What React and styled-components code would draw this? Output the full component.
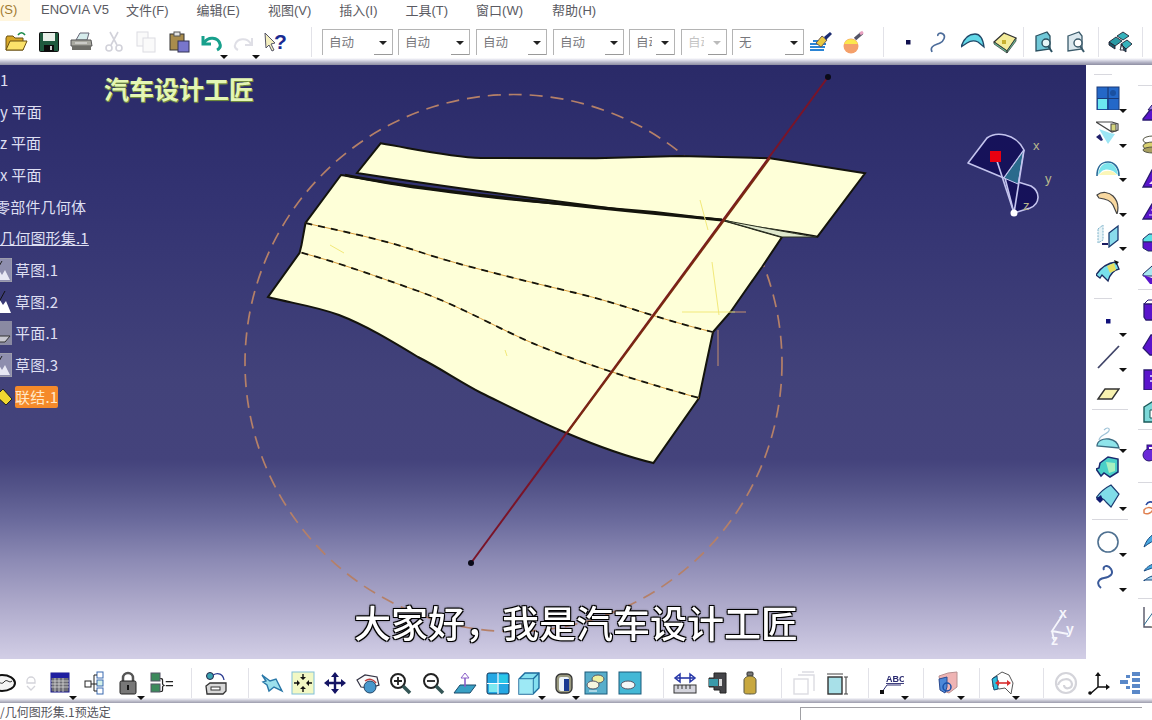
import React from 'react';
import styled, { createGlobalStyle } from 'styled-components';

const GlobalStyle = createGlobalStyle`
  html, body { margin: 0; padding: 0; background: #fff; overflow: hidden; }
  body { font-family: "Liberation Sans", "Noto Sans CJK SC", sans-serif; }
`;

const Frame = styled.div`
  position: relative;
  width: 1152px;
  height: 720px;
  overflow: hidden;
  background: #fff;
`;
const Screen = styled.div`
  display: flex;
  flex-direction: column;
  width: 1152px;
  height: 720px;
  filter: blur(0.65px);
`;
const MenuBar = styled.div`
  display: flex;
  align-items: center;
  height: 18px;
  padding-bottom: 3px;
  background: #fff;
  color: #5a5a62;
  font: 13px "Liberation Sans", "Noto Sans CJK SC", sans-serif;
`;
const SystemTab = styled.div`
  width: 30px;
  height: 100%;
  margin-bottom: -3px;
  padding-bottom: 3px;
  display: flex;
  align-items: center;
  background: #fff6de;
  color: #a07a30;
`;
const MenuItem = styled.span`
  margin-left: ${p => p.$before}px;
  white-space: nowrap;
`;
const Toolbar = styled.div`
  flex: none;
  display: flex;
  align-items: center;
  height: 38px;
  padding: 2px 0 4px;
  background: linear-gradient(#fff 0, #fff 84%, #e4e4ee 88%, #b4b4c6 94%, #8e8ea2 100%);
`;
const BottomBar = styled(Toolbar)`
  background: linear-gradient(#fff 0, #fff 88%, #dcdce6 92%, #9c9cac 100%);
  padding: 9px 0 5px;
  height: 30px;
`;
const Slot = styled.div`
  position: relative;
  flex: none;
  width: 32.5px;
  height: 24px;
  margin-left: ${p => p.$before || 0}px;
  display: flex;
  justify-content: center;
  ${p => p.$arrow && `
    &::after {
      content: "";
      position: absolute;
      right: 0;
      top: 25px;
      border: 4px solid transparent;
      border-top: 4px solid #111;
      border-bottom: 0;
    }
  `}
`;
const ToolSep = styled.div`
  flex: none;
  width: 1px;
  height: 30px;
  margin-left: ${p => p.$before || 0}px;
  background: #e2e2e8;
`;
const Drop = styled.div`
  position: relative;
  flex: none;
  box-sizing: border-box;
  width: ${p => p.$w}px;
  height: 26px;
  margin-left: ${p => p.$before}px;
  padding: 2px 0 0 6px;
  border: 1px solid #b4b4b4;
  border-bottom: 0;
  color: ${p => (p.$faded ? '#c4c4c4' : '#77777c')};
  font: 12.5px "Noto Sans CJK SC", sans-serif;
  &::before {
    content: "";
    position: absolute;
    right: 5px;
    top: 11px;
    border: 4px solid transparent;
    border-top: 4px solid ${p => (p.$faded ? '#bbb' : '#222')};
    border-bottom: 0;
  }
  &::after {
    content: "";
    position: absolute;
    right: 0;
    bottom: 0;
    width: 18px;
    height: 1px;
    background: #999;
  }
`;
const DropLabel = styled.div`
  width: ${p => p.$w - 30}px;
  overflow: hidden;
  white-space: nowrap;
`;
const Main = styled.div`
  flex: 1;
  min-height: 0;
  display: flex;
`;
const Viewport = styled.div`
  position: relative;
  flex: 1;
  overflow: hidden;
  background: linear-gradient(#2a2a68 0%, #333372 22.7%, #42427a 53%, #44437c 66.5%, #55558a 71.5%, #6a6a9c 76.6%, #8c8ab4 83.3%, #aaa6c8 90%, #d2cee6 100%);
`;
const Scene = styled.svg`
  position: absolute;
  inset: 0;
  display: block;
`;
const Tree = styled.div`
  position: absolute;
  left: 0;
  top: -1px;
  color: #dedff2;
  font: 15px "Noto Sans CJK SC", sans-serif;
`;
const TreeRow = styled.div`
  display: flex;
  align-items: center;
  height: 31.7px;
  white-space: nowrap;
  margin-left: ${p => p.$shift || 0}px;
`;
const TreeIcon = styled.div`
  width: 12px;
  height: 24px;
  flex: none;
  overflow: hidden;
  display: flex;
  justify-content: flex-end;
  margin-right: 3px;
`;
const TreeText = styled.span`
  line-height: 22px;
  letter-spacing: 0.2px;
  background: ${p => (p.$active ? '#f58a2a' : 'transparent')};
  color: ${p => (p.$active ? '#ffe8c8' : 'inherit')};
  text-decoration: ${p => (p.$line ? 'underline' : 'none')};
  border-radius: 2px;
`;
const Watermark = styled.div`
  position: absolute;
  left: 104px;
  top: 8px;
  color: #e4f6b4;
  font: 700 25px/30px "Noto Sans CJK SC", sans-serif;
  text-shadow: 1px 1px 0 #6f8a3c, 0 1px 1px #8aa850;
`;
const RightPanel = styled.div`
  flex: none;
  width: 66px;
  display: flex;
  background: #fff;
  overflow: hidden;
`;
const ColOne = styled.div`
  flex: none;
  width: 44px;
  padding-top: 9px;
  display: flex;
  flex-direction: column;
`;
const ColTwo = styled.div`
  flex: none;
  width: 22px;
  padding-top: 20px;
  display: flex;
  flex-direction: column;
`;
const PanelSep = styled.div`
  flex: none;
  height: 1px;
  margin: ${p => p.$top}px 0 ${p => p.$bottom || 0}px ${p => p.$left}px;
  width: ${p => p.$w}px;
  background: #d8d8de;
`;
const PanelIcon = styled.div`
  position: relative;
  flex: none;
  height: ${p => p.$h}px;
  margin-top: ${p => p.$top || 0}px;
  padding-left: ${p => p.$left}px;
  display: flex;
  align-items: center;
  ${p => p.$arrow && `
    &::after {
      content: "";
      position: absolute;
      left: 33px;
      top: ${p.$h / 2 + 11}px;
      border: 4px solid transparent;
      border-top: 4px solid #111;
      border-bottom: 0;
    }
  `}
`;
const StatusBar = styled.div`
  flex: none;
  display: flex;
  justify-content: space-between;
  height: 17px;
  background: #fff;
  color: #55555c;
  font: 12px/17px "Noto Sans CJK SC", sans-serif;
`;
const StatusBox = styled.div`
  width: 341px;
  margin: 4px 10px 0 0;
  border-top: 1px solid #a0a0a4;
  border-left: 1px solid #a0a0a4;
`;
const Subtitle = styled.div`
  position: absolute;
  left: 0;
  right: 0;
  top: 597px;
  text-align: center;
  color: #fff;
  font: 500 37px/50px "Noto Sans CJK SC", sans-serif;
  text-shadow: -1px -1px 0 #000, 1px -1px 0 #000, -1px 1px 0 #000, 1px 1px 0 #000, 0 0 3px #000;
`;
const IconSvg = styled.svg`
  display: block;
  flex: none;
  width: 24px;
  height: 24px;
`;
const Small = styled.text`
  font-family: "Liberation Sans", sans-serif;
`;

const Mag = ({ c = '#222' }) => (
  <>
    <circle cx="10" cy="10" r="7" fill="#fff" stroke={c} strokeWidth="2" />
    <path d="M15 15l7 7" stroke="#355" strokeWidth="3.5" />
  </>
);
const purple = (d, extra) => (
  <>
    <path d={d} fill="#5a14cc" stroke="#2a1a70" strokeWidth="1.3" />
    {extra}
  </>
);

const icons = {
  folder: <><path d="M2 8l1-2h6l2 2h8v12H2z" fill="#d8a828" stroke="#6a5010" /><path d="M6 11h17l-4 9H2z" fill="#fbe26a" stroke="#6a5010" /><path d="M14 5c2-3 5-3 7 0" stroke="#1a8a4a" strokeWidth="1.6" fill="none" /></>,
  save: <><rect x="2.5" y="2.5" width="19" height="19" rx="1" fill="#1f5a3e" stroke="#111" /><rect x="6" y="3" width="12" height="8" fill="#e8efe8" /><rect x="7" y="15" width="10" height="6.5" fill="#0c0c0c" /><rect x="13" y="16" width="2" height="4" fill="#ccc" /></>,
  print: <><path d="M7 10l4-7h9l-2 7z" fill="#d6ecec" stroke="#667" /><path d="M2 10h20l1 6H2z" fill="#a9a9a0" stroke="#555" /><path d="M3 16h19v4H3z" fill="#6e6e68" /><path d="M6 13h12" stroke="#eee" /></>,
  cut: <g stroke="#d2d2da" strokeWidth="1.6" fill="none"><path d="M8 2l7 13M16 2L9 15" /><circle cx="7" cy="18" r="3" /><circle cx="17" cy="18" r="3" /></g>,
  copy: <g stroke="#dcdce2" fill="#fafafa"><rect x="3" y="2" width="11" height="14" /><rect x="9" y="8" width="12" height="14" /></g>,
  paste: <><rect x="3" y="4" width="14" height="16" fill="#a98c4c" stroke="#333" /><rect x="7" y="2" width="6" height="4" fill="#e4e4e4" stroke="#555" /><rect x="11" y="11" width="11" height="11" fill="#7876cc" stroke="#335" /></>,
  undo: <g fill="none" stroke="#17a08c" strokeWidth="3"><path d="M4 6v8h8" /><path d="M5 13c4-7 14-6 16 1c1 3-1 5-3 6" /></g>,
  redo: <g fill="none" stroke="#dfdfe6" strokeWidth="2"><path d="M20 8v7h-7" /><path d="M19 14c-4-7-14-6-16 1c-1 3 1 4 3 5" /></g>,
  help: <><path d="M1 3l10 10l-4 1l3 6l-2 1l-3-6l-3 3z" fill="#f4efc0" stroke="#556" /><Small x="10" y="19" fontSize="21" fontWeight="700" fill="#1a2a92">?</Small></>,
  brush: <><path d="M1 14h16M1 17h15M1 20h14M4 11h11" stroke="#2a84d4" strokeWidth="2" /><path d="M7 13l6-7 5 4-6 7z" fill="#e8c840" stroke="#655" /><path d="M15 7l6-5 2 2-6 6z" fill="#1c2c70" /></>,
  ball: <><circle cx="9" cy="16" r="7.5" fill="#f4a06a" /><path d="M2 14a7.5 7.5 0 0 1 14 0z" fill="#fbe84c" /><path d="M13 9l7-6" stroke="#556" strokeWidth="3.5" /><path d="M18 4l3-2" stroke="#e8a0c0" strokeWidth="3" /></>,
  dot: <rect x="10" y="10" width="4.5" height="4.5" fill="#10104e" />,
  curve: <path d="M4 22c-3-6 4-7 8-9s6-7 3-9s-6 0-5 2" stroke="#4c6c9a" strokeWidth="1.6" fill="none" />,
  surf: <path d="M0 17C3 8 8 4 14 4c5 0 8 5 9 13l-6-5c-4-2-8-1-11 1z" fill="#62d8e8" stroke="#204868" strokeWidth="1.3" />,
  solid: <><path d="M1 12L11 3l12 5-9 13z" fill="#f4ec9a" stroke="#303030" strokeWidth="1.2" /><path d="M14 21l9-13v3l-9 12zM1 12l13 9v2L1 14z" fill="#6dc49c" stroke="#303030" strokeWidth=".7" /><rect x="9" y="10" width="4" height="4" fill="#c8b030" /></>,
  bin: <><path d="M3 6l11-4 3 4v13l-14 2z" fill="#70c8d8" stroke="#2a5060" strokeWidth="1.3" /><circle cx="13" cy="13" r="4" fill="#e6f6f8" stroke="#2a5060" strokeWidth="1.4" /><path d="M15 16l4 6" stroke="#2a5060" strokeWidth="2" /></>,
  bin2: <><path d="M3 6l11-4 3 4v13l-14 2z" fill="#dbe8ee" stroke="#3a5a6a" strokeWidth="1.3" /><circle cx="13" cy="13" r="4" fill="#fff" stroke="#3a5a6a" strokeWidth="1.4" /><path d="M15 16l4 6" stroke="#3a5a6a" strokeWidth="2" /></>,
  assembly: <g stroke="#223" strokeWidth=".9"><path d="M1 12l7-5 6 4-7 5z" fill="#2a9aa4" /><path d="M9 6l6-4 6 4-6 4z" fill="#35b2bc" /><path d="M13 14l6-4 5 4-6 5z" fill="#35b2bc" /><path d="M1 12v3l6 4v-3zM13 14v4l5 4v-3z" fill="#1a5a6a" /><path d="M12 20l2-6 2 6z" fill="#e8f4f4" /></g>,
  topo: <><ellipse cx="9" cy="12" rx="13" ry="8" fill="#f4f4f4" stroke="#111" strokeWidth="2" /><path d="M2 12c3-4 6 3 9-1s5 2 8-1" stroke="#333" fill="none" /></>,
  aFade: <g fill="none" stroke="#d4d4da" strokeWidth="1.3"><path d="M8 10a4 4 0 0 1 8 0v2H8z" /><path d="M8 15l4 4 4-4" /></g>,
  table: <><rect x="3" y="2" width="18" height="19" fill="#6e6e74" stroke="#14148c" /><rect x="3" y="2" width="18" height="5" fill="#1e1ea0" /><path d="M3 10h18M3 13h18M3 16h18M7 7v14M11 7v14M15 7v14" stroke="#d8d8d8" strokeWidth=".8" /></>,
  flow: <g stroke="#3a6ab0" fill="#fff"><rect x="14" y="1" width="6" height="6" /><rect x="14" y="9" width="6" height="6" fill="#d4f0e8" /><rect x="14" y="17" width="6" height="6" /><rect x="2" y="10" width="6" height="6" stroke="#222" /><path d="M8 13h6M11 13V4h3M11 13v7h3" stroke="#222" fill="none" /></g>,
  lock: <><path d="M7 11V7a5 5 0 0 1 10 0v4" fill="none" stroke="#555" strokeWidth="2.5" /><rect x="4" y="10" width="16" height="13" rx="1.5" fill="#777" stroke="#222" /><rect x="11" y="14" width="2" height="5" fill="#111" /></>,
  bracket: <><rect x="1" y="2" width="9" height="8" fill="#3c8a5c" stroke="#556" /><rect x="1" y="13" width="9" height="8" fill="#3c8a5c" stroke="#556" /><Small x="10" y="18" fontSize="15" fill="#222">{'}='}</Small></>,
  transfer: <><circle cx="6" cy="5" r="3.5" fill="#3aa0b0" stroke="#224" /><path d="M9 4c5-3 10-1 11 5" fill="none" stroke="#2a3a90" strokeWidth="1.3" /><path d="M2 15l4-3h16v8l-3 3H3z" fill="#d8d8d8" stroke="#333" strokeWidth="1.3" /><rect x="7" y="16" width="9" height="3" fill="#fff" stroke="#333" /></>,
  plane: <path d="M2 4l8 6 6-2 6 12-8-4-5 4-2-6-4-3 3-1z" fill="#9ce0ec" stroke="#2a78a8" strokeWidth="1.4" />,
  fit: <><rect x="1" y="1" width="22" height="22" fill="#f2f8c4" stroke="#80c0d8" /><path d="M12 3v5M12 16v5M3 12h5M16 12h5" stroke="#111" strokeWidth="1.4" /><path d="M9 6l3 3 3-3zM9 18l3-3 3 3zM6 9l3 3-3 3zM18 9l-3 3 3 3z" fill="#111" /></>,
  pan: <><path d="M12 4v16M4 12h16" stroke="#141464" strokeWidth="2.4" /><path d="M8 6l4-5 4 5zM8 18l4 5 4-5zM6 8l-5 4 5 4zM18 8l5 4-5 4z" fill="#141464" /></>,
  rot: <><path d="M1 9l8-5 12 2 2 8-9 3-9-1z" fill="#fafafa" stroke="#334" strokeWidth="1.2" /><path d="M9 10c4-3 8-2 11 2" fill="none" stroke="#c04040" strokeWidth="1.5" /><circle cx="14" cy="16" r="6" fill="#4898cc" stroke="#246" /></>,
  zoomIn: <><Mag /><path d="M6 10h8M10 6v8" stroke="#222" strokeWidth="1.8" /></>,
  zoomOut: <><Mag /><path d="M6 10h8" stroke="#222" strokeWidth="1.8" /></>,
  normal: <><path d="M1 22l6-8h16l-6 8z" fill="#38a0c4" stroke="#1a4a6a" /><path d="M12 16V4" stroke="#8a60c8" strokeWidth="1.6" /><path d="M8 7l4-5 4 5z" fill="#fff" stroke="#8a60c8" /></>,
  quad: <><rect x="1" y="2" width="22" height="21" rx="2" fill="#26a8e4" stroke="#135" /><rect x="3" y="13" width="8.5" height="8" fill="#7ce8f0" /><rect x="13" y="4" width="8.5" height="8" fill="#2ac8e8" /><path d="M12 2v21M1 12.5h22" stroke="#fff" strokeWidth="1.2" /></>,
  cube: <><path d="M2 8l6-6h14v15l-6 6H2z" fill="#84e0f0" stroke="#1a6a9c" strokeWidth="1.4" /><path d="M2 8h14v15M16 8l6-6" fill="none" stroke="#1a6a9c" strokeWidth="1.4" /><path d="M2 8h14v15H2z" fill="#a8ecf6" fillOpacity=".7" /></>,
  cyl: <><rect x="4" y="3" width="16" height="19" rx="5" fill="#9a9a80" stroke="#333" strokeWidth="1.3" /><rect x="7" y="6" width="10" height="14" rx="2" fill="#eef4f8" /><rect x="12" y="8" width="5" height="12" fill="#1a3a90" /></>,
  view1: <><rect x="1" y="1" width="22" height="22" fill="#58aecb" stroke="#1a5a7a" /><ellipse cx="14" cy="8" rx="6" ry="4" fill="#f0f0a0" stroke="#556" /><ellipse cx="9" cy="14" rx="6" ry="4" fill="#f6f6e0" stroke="#556" /><path d="M5 20h8" stroke="#fff" /></>,
  view2: <><rect x="1" y="1" width="22" height="22" fill="#44b8d6" stroke="#1a5a7a" /><ellipse cx="10" cy="14" rx="7" ry="4" fill="#f4f8f8" stroke="#556" /></>,
  measure: <><path d="M3 7h18" stroke="#2838a8" strokeWidth="1.6" /><path d="M7 3L2 7l5 4zM17 3l5 4-5 4z" fill="none" stroke="#2838a8" strokeWidth="1.5" /><rect x="1" y="14" width="22" height="8" fill="#d4d4dc" stroke="#333" /><path d="M5 14v4M9 14v4M13 14v4M17 14v4" stroke="#333" /></>,
  camera: <><path d="M8 2h12v20h-6v-3H8v-3H3V7h5z" fill="#444448" stroke="#222" /><path d="M3 8h9v7H3z" fill="#3a9aaa" /><rect x="13" y="8" width="3" height="7" fill="#ddd" /></>,
  bottle: <><rect x="9" y="1" width="6" height="4" rx="1" fill="#777" stroke="#333" /><path d="M6 9c0-2 3-4 6-4s6 2 6 4v12c0 2-2 2-6 2s-6 0-6-2z" fill="#c8a840" stroke="#554" /></>,
  fadeBox: <g fill="none" stroke="#dcdce2" strokeWidth="1.4"><rect x="2" y="8" width="14" height="15" /><path d="M6 4h16v16M10 1h12" /></g>,
  dimBox: <><rect x="3" y="6" width="14" height="17" fill="#a8e0e8" stroke="#333" strokeWidth="1.4" /><path d="M2 3h16M21 6v17M19 6h4M19 23h4" stroke="#444" strokeWidth="1.1" /></>,
  abc: <><Small x="6" y="11" fontSize="9" fontWeight="700" fill="#2a2a70" textDecoration="underline">ABC</Small><path d="M2 21l5-7h14" stroke="#2a2a70" fill="none" /><rect x="0" y="19" width="4" height="4" fill="#111" /></>,
  part: <><path d="M3 5l9-3 9-1v15l-8 6-8-3z" fill="#efb4b4" stroke="#b89090" /><path d="M3 8l8-2v10l-2 6-5-3z" fill="#4c88d8" stroke="#2a4a90" /><circle cx="11" cy="16" r="4" fill="none" stroke="#1a50a8" strokeWidth="1.5" /></>,
  compare: <><path d="M2 7l9-6 7 3 4 8-2 11-6-6-6 1-6-2z" fill="#fff" stroke="#555" /><path d="M1 8l5-3 1 13-4 1z" fill="#30c0e0" stroke="#1a4a70" /><path d="M5 12h14" stroke="#d83030" strokeWidth="1.6" /><path d="M8 9l-4 3 4 3zM16 9l4 3-4 3z" fill="#d83030" /></>,
  spiral: <g fill="none" stroke="#d4d4da" strokeWidth="2.2"><circle cx="12" cy="12" r="10" /><path d="M4 14c2-7 13-8 14-1c0 5-8 6-8 1" /></g>,
  axes: <><path d="M11 3v13l-8 7M11 16h10" stroke="#111" strokeWidth="1.5" fill="none" /><path d="M8 5l3-4 3 4zM19 13l4 3-4 3z" fill="#111" /><circle cx="3" cy="22" r="1.8" fill="#111" /></>,
  specTree: <g fill="#5a88c8"><rect x="13" y="1" width="8" height="4" /><rect x="13" y="7" width="8" height="4" /><rect x="13" y="13" width="8" height="4" /><rect x="13" y="19" width="8" height="4" /><rect x="1" y="9" width="8" height="4" /><rect x="7" y="4" width="4" height="3" /><rect x="7" y="15" width="4" height="3" /></g>,
  grid4: <><rect x="1" y="1" width="22" height="23" fill="#2468c8" stroke="#1a3a78" /><rect x="2" y="13" width="9" height="10" fill="#6ce8f0" /><path d="M12 1v23M1 12.5h22" stroke="#1a3a78" strokeWidth="1.2" /><circle cx="17" cy="7" r="3" fill="#1a50a0" /></>,
  saw: <><path d="M0 1h16l6 2v6l-6 2z" fill="#fff" stroke="#444" strokeWidth="1.2" /><rect x="15" y="3" width="5" height="7" fill="#d4d47c" stroke="#444" /><path d="M3 8l11 4 5 1-7 10z" fill="#9ce6f4" /><path d="M0 16l4-3 3 6-2 1z" fill="#20206a" /></>,
  arch: <><path d="M1 21c0-10 5-14 11-14s11 5 11 14" fill="none" stroke="#2a6a98" strokeWidth="1.6" /><path d="M2 20c1-8 5-12 10-12s9 4 10 12l-5-4c-4-2-8-2-11 0z" fill="#7ce4ec" /><path d="M5 18c4-3 10-3 14 0l2 2H3z" fill="#fbf6b8" /></>,
  horn: <><path d="M1 5c5-4 12-3 16 1c5 5 6 11 4 18l-4-9c-2-4-6-6-14-7z" fill="#f8d8a0" stroke="#444" strokeWidth="1.2" /></>,
  mirror: <><path d="M2 5l5-4v15l-5 3z" fill="#e8f4f8" stroke="#7ab0c8" strokeDasharray="2 1" /><path d="M13 9l9-7v14l-9 7z" fill="#8adcec" stroke="#1a3a70" strokeWidth="1.3" /><path d="M6 20h6" stroke="#1a1a60" strokeWidth="2" /></>,
  surfArrow: <><path d="M0 16C5 8 12 4 20 3l3 7c-5 1-9 5-11 12l-6-6-2 3z" fill="#78e0ec" stroke="#1a2a60" strokeWidth="1.3" /><path d="M11 7l7-3 2 7-6 3z" fill="#e8e060" /><path d="M18 1l5 2-3 3z" fill="#111" /></>,
  pointIc: <rect x="10" y="9" width="4.5" height="4.5" fill="#10107a" />,
  lineIc: <path d="M2 23L23 1" stroke="#404468" strokeWidth="1.8" />,
  para: <path d="M2 20l7-10h14l-7 10z" fill="#f8f2b0" stroke="#333" strokeWidth="1.4" />,
  wave: <><path d="M8 4c4-4 7-1 4 2s-8 3-9 8" fill="none" stroke="#a0c4d8" strokeWidth="1.2" /><path d="M1 20c0-5 6-8 12-7s9 4 10 9z" fill="#8ee4ea" stroke="#3a6a80" strokeWidth="1.3" /></>,
  patch: <><path d="M4 8l8-6 10 2v13l-8 5-6-4-3 3-5-7 3-1z" fill="#4ad0c8" stroke="#1a2a70" strokeWidth="1.5" /><path d="M10 7l9 1v8l-6 2z" fill="#a8f0c0" /></>,
  extrude: <><path d="M0 14c4-6 9-10 15-13l8 9-8 13-5-5c-3-4-6-5-10-4z" fill="#80dce8" stroke="#1a3a70" strokeWidth="1.2" /><path d="M0 15l5-4 2 5-3 3z" fill="#111a70" /></>,
  circleIc: <circle cx="12" cy="12" r="10" fill="none" stroke="#4e7090" strokeWidth="1.6" />,
  swirl: <path d="M5 23c-5-4-3-9 3-10s10-4 7-9s-9-3-7 1" fill="none" stroke="#3a5a9a" strokeWidth="2" />,
  p1: purple('M7 18l7-9 10-2v12H7z', <path d="M12 9l4-5h8v4z" fill="#9a80e0" stroke="#2a1a70" />),
  p2: <g stroke="#554" strokeWidth="1"><ellipse cx="17" cy="7" rx="10" ry="4" fill="#fff" /><ellipse cx="17" cy="13" rx="10" ry="4" fill="#d8d070" /><ellipse cx="17" cy="17" rx="10" ry="3" fill="#a8a060" /></g>,
  p3: purple('M7 22l9-17h8v17z', <path d="M13 19l9-9v9z" fill="#f4e8ff" />),
  p4: purple('M7 22l9-15h8v15z', <path d="M13 18h11M15 13h9" stroke="#e8e0ff" />),
  p5: <><path d="M7 10l6-5h11v8H7z" fill="#5ce0e4" stroke="#1a2a60" /><path d="M7 13h17v9H12l-5-3z" fill="#5a14cc" stroke="#1a2a60" /></>,
  p6: <><path d="M7 13l9-8h8v10H7z" fill="#a8e8f0" stroke="#1a2a60" /><path d="M7 14l9 3h8v6H14z" fill="#5a14cc" /></>,
  p7: purple('M8 6h16v16H10l-2-3z', <path d="M8 6l4-4h12" stroke="#2a1a70" fill="none" />),
  p8: purple('M7 16l8-13h9v20H14z'),
  p9: purple('M8 4h16v20H8z', <path d="M14 10h10M14 15h10" stroke="#c8b8ff" strokeWidth="2" />),
  p10: <><path d="M8 8l8-5h8v20H8z" fill="#7cd8d8" stroke="#1a5a5a" strokeWidth="1.4" /><path d="M14 11h10v8H14z" fill="#fff" stroke="#1a5a5a" /></>,
  p11: <><rect x="11" y="5" width="13" height="15" fill="#5a14cc" stroke="#2a1a70" /><circle cx="13" cy="15" r="6" fill="#6a28d8" stroke="#2a1a70" /><path d="M13 8h11" stroke="#fff" strokeWidth="2" /></>,
  p12: <><path d="M10 11c2-4 6-4 8-1" stroke="#2a4aa0" strokeWidth="1.6" fill="none" /><path d="M8 16c2-3 6-3 9-1c-1 4-6 6-9 4z" fill="none" stroke="#e08050" strokeWidth="1.5" /></>,
  p13: <path d="M8 20c3-9 9-14 16-15v7c-6 1-11 4-16 8z" fill="#48a8e0" stroke="#1a4a80" />,
  p14: <><path d="M8 11c3-5 9-8 16-8v4c-6 0-11 2-16 4z" fill="#48a8e0" stroke="#1a4a80" /><path d="M8 21c4-4 9-6 16-6v5H8z" fill="#a8d8f0" stroke="#1a4a80" /></>,
  p15: <><path d="M8 18c3-9 8-13 16-14v7c-6 1-11 3-16 7z" fill="#48a8e0" stroke="#1a4a80" /><path d="M8 18v4h16" fill="none" stroke="#555" /></>,
  p16: <><path d="M8 2v20h16" fill="#fff" stroke="#556" strokeWidth="1.4" /><path d="M8 20L20 3" stroke="#2a6a90" /><path d="M15 22l9-7v7z" fill="#e8d860" /></>,
  sketch: <><rect width="24" height="24" fill="#8e8eae" stroke="#aaa" /><path d="M2 22l7-13 5 8 3-5 5 10z" fill="#e8e8f4" /><path d="M8 3l2 7 4-7" stroke="#222" fill="none" /></>,
  sketch2: <><path d="M2 23l8-16 5 8 3-4 5 12z" fill="#fff" /><path d="M8 3l3 9 6-11" stroke="#111" fill="none" /></>,
  planeNode: <><rect width="24" height="24" fill="#8a8aa2" /><path d="M2 15h20l-5 6H2z" fill="#c8c8d0" stroke="#333" /></>,
  joinNode: <><path d="M15 4l9 10-6 6-10-9z" fill="#f0d830" stroke="#222" /><path d="M6 14l6 7-6 3-6-5z" fill="#30b8e0" stroke="#222" /></>,
};

const Icon = ({ name }) => <IconSvg viewBox="0 0 24 24">{icons[name]}</IconSvg>;

const renderTools = items =>
  items.map(([name, before, arrow], i) =>
    name === '|' ? (
      <ToolSep key={i} $before={before} />
    ) : (
      <Slot key={i} $before={before} $arrow={arrow}>
        <Icon name={name} />
      </Slot>
    )
  );

const topLeft = [['folder'], ['save'], ['print'], ['cut'], ['copy'], ['paste'], ['undo', 0, true], ['redo', 0, true], ['help'], ['|', 18]];
const drops = [
  ['自动', 71, 10.5], ['自动', 72, 5], ['自动', 71, 6], ['自动', 71, 6],
  ['自动', 46, 5], ['自动', 46, 6, true], ['无', 72, 5],
];
const topRight = [
  ['brush', 1], ['ball'], ['|', 13], ['dot', 7.5], ['curve'], ['surf'], ['solid'], ['|', 1],
  ['bin', 5], ['bin2'], ['|', 4], ['assembly', 5], ['|', 5.5], ['fadeBox', 4],
];
const bottom = [
  ['topo', -11], ['aFade', -7], ['table', -3, true], ['flow', 2], ['lock', 1, true], ['bracket', 1], ['|', 13],
  ['transfer', 8], ['|', 15.5], ['plane', 7], ['fit', -2], ['pan'], ['rot'], ['zoomIn'], ['zoomOut'], ['normal'], ['quad'],
  ['cube', -1, true], ['cyl', 2, true], ['view1'], ['view2', 1], ['|', 17], ['measure', 5], ['camera'], ['bottle'], ['|', 14.5],
  ['fadeBox', 6], ['dimBox'], ['|', 15], ['abc', 7, true], ['|', 14.5], ['part', 8, true], ['|', 14.5], ['compare', 7, true],
  ['|', 23.5], ['spiral', 6], ['axes'], ['specTree'],
];
const menus = [
  ['ENOVIA V5', 11], ['文件(F)', 17], ['编辑(E)', 28], ['视图(V)', 28],
  ['插入(I)', 28], ['工具(T)', 28], ['窗口(W)', 28], ['帮助(H)', 29],
];
const treeRows = [
  { text: '1' },
  { text: 'y 平面' },
  { text: 'z 平面' },
  { text: 'x 平面' },
  { text: '零部件几何体', shift: -5 },
  { text: '几何图形集.1', line: true },
  { text: '草图.1', icon: 'sketch' },
  { text: '草图.2', icon: 'sketch2' },
  { text: '平面.1', icon: 'planeNode' },
  { text: '草图.3', icon: 'sketch' },
  { text: '联结.1', icon: 'joinNode', active: true },
];

const colOne = [
  { sep: [0, 6, 8, 18] },
  { i: 'grid4', a: 1 }, { i: 'saw', a: 1 }, { i: 'arch', a: 1 }, { i: 'horn', a: 1 }, { i: 'mirror', a: 1 }, { i: 'surfArrow' },
  { sep: [10, 6, 8, 18] },
  { i: 'pointIc', a: 1 }, { i: 'lineIc', a: 1 }, { i: 'para' },
  { sep: [0.5, 0, 6, 36] },
  { i: 'wave', a: 1, h: 29, t: 13.5 }, { i: 'patch', h: 29 }, { i: 'extrude', a: 1, h: 29 },
  { sep: [8.5, 0, 6, 36] },
  { i: 'circleIc', a: 1, t: 4.75 }, { i: 'swirl', a: 1 },
];
const colTwo = [
  { i: 'p1', h: 32 }, { i: 'p2', h: 32 }, { i: 'p3', h: 32 }, { i: 'p4', h: 32 }, { i: 'p5', h: 32 }, { i: 'p6', h: 32 },
  { sep: [0, 0] },
  { i: 'p7', h: 33.7, t: 3.5 }, { i: 'p8', h: 33.7 }, { i: 'p9', h: 33.7 }, { i: 'p10', h: 33.7 },
  { sep: [1, 0] },
  { i: 'p11', h: 44 },
  { sep: [8, 0] },
  { i: 'p12', h: 33, t: 6.5 }, { i: 'p13', h: 33 }, { i: 'p14', h: 33 },
  { sep: [9.5, 0] },
  { i: 'p16', h: 36 },
];

const sheetA = 'M380.6 143.3C420 150 450 157 481 158L596 158.3L679 156L770 158.3L865 173.3L817.5 236.7C740 222 560 205 357 173Z';
const sheetB = 'M341 175C370 180 395 185 418 188C470 195 500 199 537 202L655 212L722.6 220L782 237L762 267L730.5 312L713 332L707 360L699 398L653.4 463C620 455 590 443 566.4 433C535 420 510 407 481.4 393C460 382 440 368 418 357C390 340 365 325 339 315C315 306 290 303 268 297L299.5 253L301.5 245L305.5 223Z';
const fold1 = 'M305.5 223C340 231 378 238 420 252S530 282 576 293S655 318 712.7 332';
const fold2 = 'M301.5 252.7C340 263 378 277 418 291S505 332 537 345S620 376 699 398';

const App = () => (
  <Frame>
    <GlobalStyle />
    <Screen>
      <MenuBar>
        <SystemTab>(S)</SystemTab>
        {menus.map(([label, before]) => (
          <MenuItem key={label} $before={before}>{label}</MenuItem>
        ))}
      </MenuBar>
      <Toolbar>
        {renderTools(topLeft)}
        {drops.map(([label, w, before, faded], i) => (
          <Drop key={i} $w={w} $before={before} $faded={faded}>
            <DropLabel $w={w}>{label}</DropLabel>
          </Drop>
        ))}
        {renderTools(topRight)}
      </Toolbar>
      <Main>
        <Viewport>
          <Scene width="1086" height="594" viewBox="0 65 1086 594">
            <circle cx="513.5" cy="363" r="268.5" fill="none" stroke="#b58068" strokeWidth="1.7" strokeDasharray="13 8" />
            <path d={sheetA} fill="#feffd8" stroke="#14140c" strokeWidth="2" />
            <path d={sheetB} fill="#feffd8" stroke="#14140c" strokeWidth="2" />
            <path d="M345 175C420 190 560 205 722 220" fill="none" stroke="#14140c" strokeWidth="2.8" />
            <path d="M722 220C750 225 790 233 816 237L782 237Z" fill="#dfe8cc" stroke="#2a3020" strokeWidth="1" />
            <g fill="none" stroke="#f2e97a" strokeWidth="1">
              <path d="M682 312H735M712 262L719 315M700 200L708 230M330 245l14 8M505 350l2 6" />
            </g>
            <path d="M735 312H746M718 330V366" stroke="#c49070" strokeWidth="1" fill="none" />
            <path d={fold1} fill="none" stroke="#d89a38" strokeWidth="1" />
            <path d={fold2} fill="none" stroke="#d89a38" strokeWidth="1" />
            <path d={fold1} fill="none" stroke="#14140c" strokeWidth="1.8" strokeDasharray="7 6" />
            <path d={fold2} fill="none" stroke="#14140c" strokeWidth="1.8" strokeDasharray="7 6" />
            <path d="M471 563L828 77" stroke="#7a1428" strokeWidth="2" />
            <path d="M567 433L770 158" stroke="#7a2a10" strokeWidth="2" />
            <circle cx="471" cy="563" r="3" fill="#0a0a18" />
            <circle cx="828" cy="77" r="3" fill="#0a0a18" />
            <g stroke="#c4c4ee" strokeWidth="1.6" strokeLinejoin="round">
              <path d="M968 163L987 138C995 132 1015 132 1024 150L1004 178Z" fill="#16125a" />
              <path d="M1005 178L1031 186C1041 192 1040 204 1030 208L1014 213Z" fill="#16125a" />
              <path d="M1024 150L1018 184L1004 178Z" fill="#2a6a8c" strokeWidth="1" />
              <path d="M996 158L1014 213M1024 150L1014 213" fill="none" />
            </g>
            <rect x="990" y="151" width="11" height="11" fill="#e80010" />
            <circle cx="1014" cy="213" r="3.5" fill="#fff" />
            <g fontFamily="Liberation Sans, sans-serif" fontSize="13" fill="#b8b88c">
              <text x="1033" y="150">x</text>
              <text x="1045" y="183">y</text>
              <text x="1023" y="210">z</text>
            </g>
            <path d="M1062 616L1052 631L1068 634M1052 631L1054 640" fill="none" stroke="#f6f6fc" strokeWidth="1.8" />
            <g fontFamily="Liberation Sans, sans-serif" fontSize="14" fontWeight="700" fill="#f6f6fc">
              <text x="1059" y="618">x</text>
              <text x="1066" y="634">y</text>
              <text x="1051" y="645">z</text>
            </g>
          </Scene>
          <Tree>
            {treeRows.map(row => (
              <TreeRow key={row.text} $shift={row.shift}>
                {row.icon && (
                  <TreeIcon>
                    <Icon name={row.icon} />
                  </TreeIcon>
                )}
                <TreeText $line={row.line} $active={row.active}>{row.text}</TreeText>
              </TreeRow>
            ))}
          </Tree>
          <Watermark>汽车设计工匠</Watermark>
        </Viewport>
        <RightPanel>
          <ColOne>
            {colOne.map((it, i) =>
              it.sep ? (
                <PanelSep key={i} $top={it.sep[0]} $bottom={it.sep[1]} $left={it.sep[2]} $w={it.sep[3]} />
              ) : (
                <PanelIcon key={i} $h={it.h || 34.5} $top={it.t} $left={10} $arrow={it.a}>
                  <Icon name={it.i} />
                </PanelIcon>
              )
            )}
          </ColOne>
          <ColTwo>
            <PanelSep $top={0} $bottom={11} $left={8} $w={14} />
            {colTwo.map((it, i) =>
              it.sep ? (
                <PanelSep key={i} $top={it.sep[0]} $left={8} $w={14} />
              ) : (
                <PanelIcon key={i} $h={it.h} $top={it.t} $left={6}>
                  <Icon name={it.i} />
                </PanelIcon>
              )
            )}
          </ColTwo>
        </RightPanel>
      </Main>
      <BottomBar>{renderTools(bottom)}</BottomBar>
      <StatusBar>
        <span>/几何图形集.1预选定</span>
        <StatusBox />
      </StatusBar>
    </Screen>
    <Subtitle>大家好，我是汽车设计工匠</Subtitle>
  </Frame>
);

export default App;
